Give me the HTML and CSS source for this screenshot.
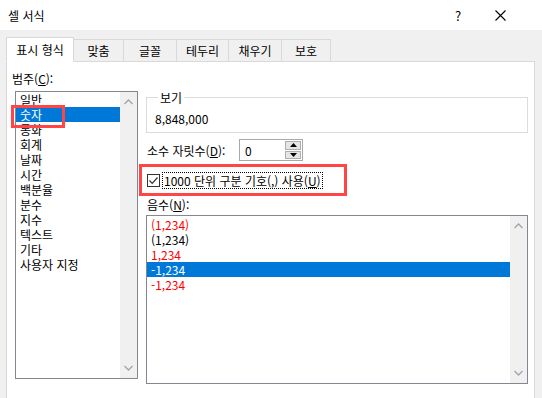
FILE: index.html
```html
<!DOCTYPE html>
<html lang="ko">
<head>
    <meta charset="UTF-8">
    <title>셀 서식</title>
    <link rel="stylesheet" href="styles.css">
</head>
<body>
    <div class="dialog">
        <div class="titlebar">
            <span class="title">셀 서식</span>
            <span class="tb-btn help">?</span>
            <span class="tb-btn close">
                <svg width="11" height="11" viewBox="0 0 11 11"><path d="M0.5 0.5 L10.5 10.5 M10.5 0.5 L0.5 10.5" stroke="#000" stroke-width="1.1" fill="none"/></svg>
            </span>
        </div>

        <div class="main">
            <div class="tabs">
                <div class="tab active">표시 형식</div>
                <div class="tab w50">맞춤</div>
                <div class="tab w53">글꼴</div>
                <div class="tab w52">테두리</div>
                <div class="tab w53">채우기</div>
                <div class="tab w49">보호</div>
            </div>

            <div class="panel">
                <div class="left-col">
                    <div class="label">범주(<u>C</u>):</div>
                    <div class="listbox category">
                        <ul class="items">
                            <li>일반</li>
                            <li class="selected">숫자</li>
                            <li>통화</li>
                            <li>회계</li>
                            <li>날짜</li>
                            <li>시간</li>
                            <li>백분율</li>
                            <li>분수</li>
                            <li>지수</li>
                            <li>텍스트</li>
                            <li>기타</li>
                            <li>사용자 지정</li>
                        </ul>
                        <div class="scrollbar">
                            <svg width="9" height="6" viewBox="0 0 9 6"><path d="M0.5 5 L4.5 1 L8.5 5" stroke="#a6a6a6" stroke-width="1.4" fill="none"/></svg>
                            <svg width="9" height="6" viewBox="0 0 9 6"><path d="M0.5 1 L4.5 5 L8.5 1" stroke="#a6a6a6" stroke-width="1.4" fill="none"/></svg>
                        </div>
                        <div class="mark mark-category"></div>
                    </div>
                </div>

                <div class="right-col">
                    <fieldset class="sample">
                        <legend>보기</legend>
                        <div class="sample-value">8,848,000</div>
                    </fieldset>

                    <div class="decimal-row">
                        <span class="decimal-label">소수 자릿수(<u>D</u>):</span>
                        <div class="spin">
                            <span class="spin-value">0</span>
                            <div class="spin-btns">
                                <div class="spin-btn">
                                    <svg width="7" height="4" viewBox="0 0 7 4"><path d="M0 4 L3.5 0 L7 4 Z" fill="#000"/></svg>
                                </div>
                                <div class="spin-btn">
                                    <svg width="7" height="4" viewBox="0 0 7 4"><path d="M0 0 L3.5 4 L7 0 Z" fill="#000"/></svg>
                                </div>
                            </div>
                        </div>
                    </div>

                    <div class="check-row">
                        <span class="checkbox">
                            <svg width="11" height="11" viewBox="0 0 11 11"><path d="M1.5 5.5 L4.2 8.3 L9.5 2.5" stroke="#333" stroke-width="1.2" fill="none"/></svg>
                        </span>
                        <span class="check-text">1000 단위 구분 기호(,) 사용(<u>U</u>)</span>
                    </div>

                    <div class="label neg-label">음수(<u>N</u>):</div>
                    <div class="listbox negative">
                        <ul class="items">
                            <li class="red">(1,234)</li>
                            <li>(1,234)</li>
                            <li class="red">1,234</li>
                            <li class="selected">-1,234</li>
                            <li class="red">-1,234</li>
                        </ul>
                        <div class="scrollbar">
                            <svg width="9" height="6" viewBox="0 0 9 6"><path d="M0.5 5 L4.5 1 L8.5 5" stroke="#a6a6a6" stroke-width="1.4" fill="none"/></svg>
                            <svg width="9" height="6" viewBox="0 0 9 6"><path d="M0.5 1 L4.5 5 L8.5 1" stroke="#a6a6a6" stroke-width="1.4" fill="none"/></svg>
                        </div>
                    </div>
                </div>
            </div>
        </div>
    </div>
</body>
</html>
```

FILE: styles.css
```css
* {
    margin: 0;
    padding: 0;
    box-sizing: border-box;
}

body {
    background: #f0f0f0;
    font-family: "Noto Sans CJK KR", "Noto Sans", sans-serif;
    font-size: 12px;
    line-height: 15px;
    color: #000;
}

u {
    text-decoration: underline;
    text-underline-offset: 1px;
}

.dialog {
    width: 542px;
    height: 398px;
    overflow: hidden;
}

/* title bar */
.titlebar {
    height: 30px;
    background: #fff;
    display: flex;
    align-items: center;
    padding-left: 8px;
    padding-right: 21px;
}

.title {
    flex: 1;
    font-size: 12px;
}

.tb-btn {
    width: 42px;
    height: 30px;
    display: flex;
    align-items: center;
    justify-content: center;
}

.help {
    font-size: 13px;
}

/* tabs + panel */
.main {
    padding: 8px 7px 0 6px;
}

.tabs {
    display: flex;
    align-items: flex-end;
    height: 24px;
    margin-bottom: -1px;
    position: relative;
    z-index: 1;
}

.tab {
    height: 23px;
    border: 1px solid #d9d9d9;
    border-left: none;
    border-bottom: 1px solid #d9d9d9;
    background: #f0f0f0;
    display: flex;
    align-items: center;
    justify-content: center;
}

.tab.active {
    width: 68px;
    height: 25px;
    background: #fff;
    border-left: 1px solid #d9d9d9;
    border-bottom-color: #fff;
    padding-bottom: 1px;
}

.w50 { width: 50px; }
.w53 { width: 53px; }
.w52 { width: 52px; }
.w49 { width: 49px; }

.panel {
    height: 340px;
    background: #fff;
    border: 1px solid #d9d9d9;
    display: flex;
}

.left-col {
    padding: 9px 0 0 5px;
}

.label {
    height: 15px;
}

/* list boxes */
.listbox {
    position: relative;
    border: 1px solid #828790;
    background: #fff;
    display: flex;
}

.listbox .items {
    list-style: none;
    flex: 1;
}

.listbox li {
    height: 15px;
    padding-left: 4px;
    white-space: nowrap;
}

.listbox li.selected {
    background: #0078d7;
    color: #fff;
}

.listbox li.red {
    color: #ff0000;
}

.scrollbar {
    width: 17px;
    background: #f0f0f0;
    display: flex;
    flex-direction: column;
    justify-content: space-between;
    align-items: center;
    padding: 7px 0 7px;
}

.category {
    width: 123px;
    height: 288px;
    margin: 5px 0 0 3px;
}

.mark {
    position: absolute;
    border: 3px solid #ff4545;
}

.mark-category {
    left: -5px;
    top: 13px;
    width: 54px;
    height: 23px;
}

.right-col {
    width: 382px;
    margin-left: 8px;
    padding-top: 28px;
}

/* sample group */
.sample {
    border: 1px solid #dcdcdc;
    height: 43px;
    padding: 0 8px;
}

.sample legend {
    margin-left: 3px;
    padding: 0 2px;
    line-height: 15px;
}

.sample-value {
    padding-top: 6px;
}

/* decimal places */
.decimal-row {
    display: flex;
    align-items: center;
    margin-top: 6px;
    padding-left: 1px;
}

.decimal-label {
    width: 92px;
}

.spin {
    width: 64px;
    height: 22px;
    border: 1px solid #a9a9a9;
    display: flex;
    align-items: center;
    padding: 1px;
}

.spin-value {
    flex: 1;
    padding-left: 4px;
}

.spin-btns {
    width: 16px;
    height: 18px;
    display: flex;
    flex-direction: column;
    gap: 1px;
}

.spin-btn {
    flex: 1;
    background: #e6e6e6;
    border: 1px solid #adadad;
    display: flex;
    align-items: center;
    justify-content: center;
}

/* thousands separator */
.check-row {
    display: flex;
    align-items: center;
    width: 208px;
    height: 32px;
    margin: 3px 0 0 -7px;
    border: 3px solid #ff4545;
    padding-left: 5px;
}

.checkbox {
    width: 13px;
    height: 13px;
    border: 1px solid #333;
    display: flex;
    align-items: center;
    justify-content: center;
    margin-right: 2px;
}

.check-text {
    border: 1px dotted #000;
    padding: 0 1px;
    line-height: 15px;
    white-space: nowrap;
}

.neg-label {
    margin-top: 1px;
    padding-left: 1px;
}

.negative {
    height: 169px;
    margin-top: 3px;
}

.negative .items {
    padding-top: 1px;
}
```
